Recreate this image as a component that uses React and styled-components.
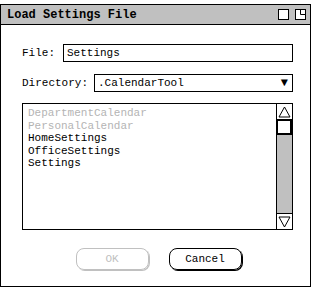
import React from 'react';
import styled, { createGlobalStyle } from 'styled-components';

const GlobalStyle = createGlobalStyle`
  body {
    margin: 0;
    background: #fff;
    font-family: "Liberation Mono", "DejaVu Sans Mono", monospace;
  }
`;

const Window = styled.div`
  margin-top: 4px;
  width: 309px;
  height: 281px;
  border: 1px solid #000;
  display: flex;
  flex-direction: column;
  background: #fff;
`;

const TitleBar = styled.div`
  height: 19px;
  background: #c0c0c0;
  border-bottom: 1px solid #000;
  display: flex;
  align-items: center;
  justify-content: space-between;
  padding: 0 4px 0 6px;
`;

const Title = styled.span`
  font-size: 12px;
  font-weight: bold;
`;

const TitleIcons = styled.div`
  display: flex;
  gap: 6px;
`;

const Body = styled.div`
  padding: 19px 17px 0 21px;
  display: flex;
  flex-direction: column;
`;

const Row = styled.div`
  display: flex;
  align-items: center;
  height: 18px;
  margin-bottom: ${(p) => p.gap || 0}px;
  font-size: 11px;
`;

const Label = styled.span`
  width: ${(p) => p.width}px;
`;

const Field = styled.div`
  flex: 1;
  height: 16px;
  border: 1px solid #000;
  display: flex;
  align-items: center;
  justify-content: space-between;
  padding: 0 4px 0 3px;
`;

const List = styled.div`
  height: 125px;
  border: 1px solid #000;
  display: flex;
  font-size: 11px;
`;

const Items = styled.div`
  flex: 1;
  padding: 3px 5px;
  line-height: 12.5px;
`;

const Item = styled.div`
  color: ${(p) => (p.disabled ? '#b4b4b4' : '#000')};
`;

const Scrollbar = styled.div`
  width: 15px;
  border-left: 1px solid #000;
  display: flex;
  flex-direction: column;
  background: #c0c0c0;
`;

const ScrollButton = styled.div`
  height: 15px;
  background: #fff;
  border-${(p) => (p.up ? 'bottom' : 'top')}: 1px solid #000;
  display: flex;
  align-items: center;
  justify-content: center;
`;

const Thumb = styled.div`
  height: 12px;
  background: #fff;
  border: 1px solid #000;
  border-width: 1px 2px 2px 1px;
`;

const Track = styled.div`
  flex: 1;
`;

const Buttons = styled.div`
  display: flex;
  justify-content: center;
  gap: 20px;
  margin-top: 18px;
  padding-left: 2px;
`;

const Button = styled.div`
  width: 71px;
  height: 20px;
  border: 1px solid ${(p) => (p.disabled ? '#c0c0c0' : '#000')};
  border-radius: 8px;
  box-shadow: 1px 1px 0 ${(p) => (p.disabled ? '#c0c0c0' : '#000')};
  color: ${(p) => (p.disabled ? '#c0c0c0' : '#000')};
  font-size: 11px;
  display: flex;
  align-items: center;
  justify-content: center;
`;

const Square = ({ restore }) => (
  <svg width="11" height="11" viewBox="0 0 11 11">
    <rect x="0.5" y="0.5" width="10" height="10" fill="#fff" stroke="#000" />
    {restore && <path d="M5.5 0.5 V5.5 H10.5" fill="none" stroke="#000" />}
  </svg>
);

const Arrow = ({ up }) => (
  <svg width="13" height="12" viewBox="0 0 13 12">
    <path
      d={up ? 'M6.5 1 L12 11 H1 Z' : 'M1 1 H12 L6.5 11 Z'}
      fill="none"
      stroke="#000"
    />
  </svg>
);

const files = [
  { name: 'DepartmentCalendar', disabled: true },
  { name: 'PersonalCalendar', disabled: true },
  { name: 'HomeSettings' },
  { name: 'OfficeSettings' },
  { name: 'Settings' },
];

export default function App() {
  return (
    <>
      <GlobalStyle />
      <Window>
        <TitleBar>
          <Title>Load Settings File</Title>
          <TitleIcons>
            <Square />
            <Square restore />
          </TitleIcons>
        </TitleBar>
        <Body>
          <Row gap={12}>
            <Label width={41}>File:</Label>
            <Field>Settings</Field>
          </Row>
          <Row gap={11}>
            <Label width={72}>Directory:</Label>
            <Field>
              <span>.CalendarTool</span>
              <span style={{ fontSize: 12 }}>▼</span>
            </Field>
          </Row>
          <List>
            <Items>
              {files.map((f) => (
                <Item key={f.name} disabled={f.disabled}>
                  {f.name}
                </Item>
              ))}
            </Items>
            <Scrollbar>
              <ScrollButton up>
                <Arrow up />
              </ScrollButton>
              <Thumb />
              <Track />
              <ScrollButton>
                <Arrow />
              </ScrollButton>
            </Scrollbar>
          </List>
          <Buttons>
            <Button disabled>OK</Button>
            <Button>Cancel</Button>
          </Buttons>
        </Body>
      </Window>
    </>
  );
}
